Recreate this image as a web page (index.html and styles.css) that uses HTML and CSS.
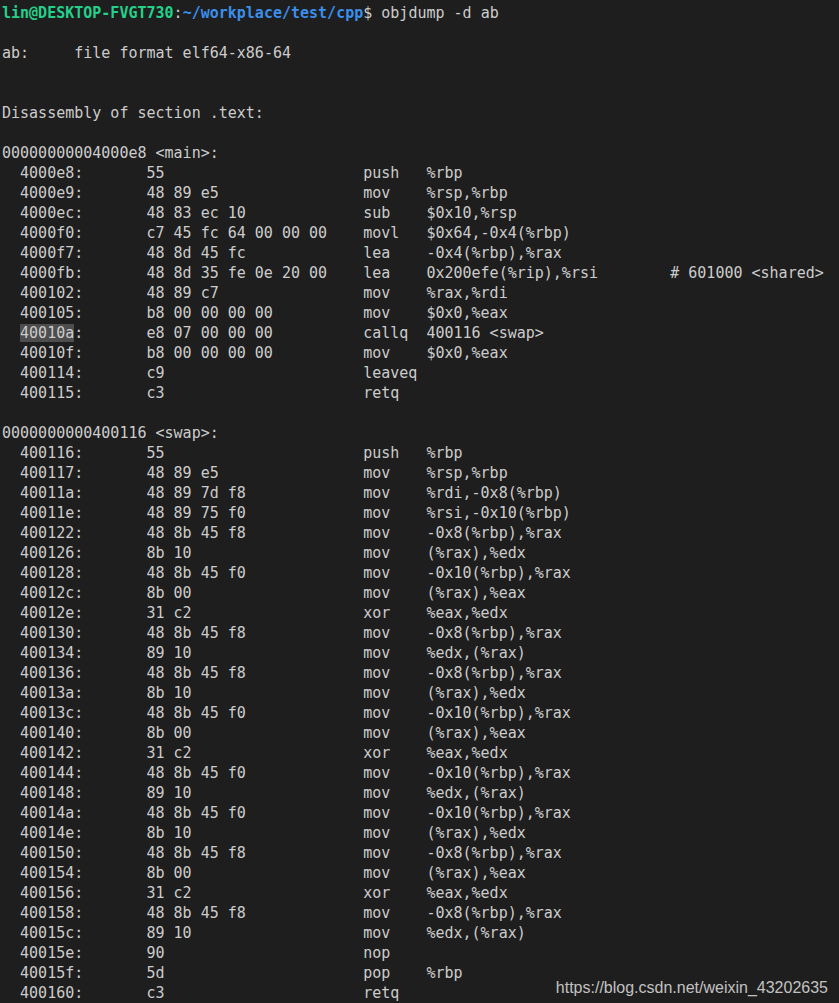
FILE: index.html
```html
<!DOCTYPE html>
<html>
<head>
<meta charset="utf-8">
<link rel="stylesheet" href="styles.css">
</head>
<body>
<div class="term">
  <div class="line"><span class="user">lin@DESKTOP-FVGT730</span>:<span class="path">~/workplace/test/cpp</span>$ objdump -d ab</div>
  <div class="line"></div>
  <div class="line">ab:     file format elf64-x86-64</div>
  <div class="line"></div>
  <div class="line"></div>
  <div class="line">Disassembly of section .text:</div>
  <div class="line"></div>
  <div class="line">00000000004000e8 &lt;main&gt;:</div>
  <div class="ins"><span class="addr">4000e8:</span><span class="hex">55</span><span class="mn">push</span><span>%rbp</span></div>
  <div class="ins"><span class="addr">4000e9:</span><span class="hex">48 89 e5</span><span class="mn">mov</span><span>%rsp,%rbp</span></div>
  <div class="ins"><span class="addr">4000ec:</span><span class="hex">48 83 ec 10</span><span class="mn">sub</span><span>$0x10,%rsp</span></div>
  <div class="ins"><span class="addr">4000f0:</span><span class="hex">c7 45 fc 64 00 00 00</span><span class="mn">movl</span><span>$0x64,-0x4(%rbp)</span></div>
  <div class="ins"><span class="addr">4000f7:</span><span class="hex">48 8d 45 fc</span><span class="mn">lea</span><span>-0x4(%rbp),%rax</span></div>
  <div class="ins"><span class="addr">4000fb:</span><span class="hex">48 8d 35 fe 0e 20 00</span><span class="mn">lea</span><span class="op-wide">0x200efe(%rip),%rsi</span><span># 601000 &lt;shared&gt;</span></div>
  <div class="ins"><span class="addr">400102:</span><span class="hex">48 89 c7</span><span class="mn">mov</span><span>%rax,%rdi</span></div>
  <div class="ins"><span class="addr">400105:</span><span class="hex">b8 00 00 00 00</span><span class="mn">mov</span><span>$0x0,%eax</span></div>
  <div class="ins"><span class="addr"><span class="sel">40010a</span>:</span><span class="hex">e8 07 00 00 00</span><span class="mn">callq</span><span>400116 &lt;swap&gt;</span></div>
  <div class="ins"><span class="addr">40010f:</span><span class="hex">b8 00 00 00 00</span><span class="mn">mov</span><span>$0x0,%eax</span></div>
  <div class="ins"><span class="addr">400114:</span><span class="hex">c9</span><span class="mn">leaveq</span></div>
  <div class="ins"><span class="addr">400115:</span><span class="hex">c3</span><span class="mn">retq</span></div>
  <div class="line"></div>
  <div class="line">0000000000400116 &lt;swap&gt;:</div>
  <div class="ins"><span class="addr">400116:</span><span class="hex">55</span><span class="mn">push</span><span>%rbp</span></div>
  <div class="ins"><span class="addr">400117:</span><span class="hex">48 89 e5</span><span class="mn">mov</span><span>%rsp,%rbp</span></div>
  <div class="ins"><span class="addr">40011a:</span><span class="hex">48 89 7d f8</span><span class="mn">mov</span><span>%rdi,-0x8(%rbp)</span></div>
  <div class="ins"><span class="addr">40011e:</span><span class="hex">48 89 75 f0</span><span class="mn">mov</span><span>%rsi,-0x10(%rbp)</span></div>
  <div class="ins"><span class="addr">400122:</span><span class="hex">48 8b 45 f8</span><span class="mn">mov</span><span>-0x8(%rbp),%rax</span></div>
  <div class="ins"><span class="addr">400126:</span><span class="hex">8b 10</span><span class="mn">mov</span><span>(%rax),%edx</span></div>
  <div class="ins"><span class="addr">400128:</span><span class="hex">48 8b 45 f0</span><span class="mn">mov</span><span>-0x10(%rbp),%rax</span></div>
  <div class="ins"><span class="addr">40012c:</span><span class="hex">8b 00</span><span class="mn">mov</span><span>(%rax),%eax</span></div>
  <div class="ins"><span class="addr">40012e:</span><span class="hex">31 c2</span><span class="mn">xor</span><span>%eax,%edx</span></div>
  <div class="ins"><span class="addr">400130:</span><span class="hex">48 8b 45 f8</span><span class="mn">mov</span><span>-0x8(%rbp),%rax</span></div>
  <div class="ins"><span class="addr">400134:</span><span class="hex">89 10</span><span class="mn">mov</span><span>%edx,(%rax)</span></div>
  <div class="ins"><span class="addr">400136:</span><span class="hex">48 8b 45 f8</span><span class="mn">mov</span><span>-0x8(%rbp),%rax</span></div>
  <div class="ins"><span class="addr">40013a:</span><span class="hex">8b 10</span><span class="mn">mov</span><span>(%rax),%edx</span></div>
  <div class="ins"><span class="addr">40013c:</span><span class="hex">48 8b 45 f0</span><span class="mn">mov</span><span>-0x10(%rbp),%rax</span></div>
  <div class="ins"><span class="addr">400140:</span><span class="hex">8b 00</span><span class="mn">mov</span><span>(%rax),%eax</span></div>
  <div class="ins"><span class="addr">400142:</span><span class="hex">31 c2</span><span class="mn">xor</span><span>%eax,%edx</span></div>
  <div class="ins"><span class="addr">400144:</span><span class="hex">48 8b 45 f0</span><span class="mn">mov</span><span>-0x10(%rbp),%rax</span></div>
  <div class="ins"><span class="addr">400148:</span><span class="hex">89 10</span><span class="mn">mov</span><span>%edx,(%rax)</span></div>
  <div class="ins"><span class="addr">40014a:</span><span class="hex">48 8b 45 f0</span><span class="mn">mov</span><span>-0x10(%rbp),%rax</span></div>
  <div class="ins"><span class="addr">40014e:</span><span class="hex">8b 10</span><span class="mn">mov</span><span>(%rax),%edx</span></div>
  <div class="ins"><span class="addr">400150:</span><span class="hex">48 8b 45 f8</span><span class="mn">mov</span><span>-0x8(%rbp),%rax</span></div>
  <div class="ins"><span class="addr">400154:</span><span class="hex">8b 00</span><span class="mn">mov</span><span>(%rax),%eax</span></div>
  <div class="ins"><span class="addr">400156:</span><span class="hex">31 c2</span><span class="mn">xor</span><span>%eax,%edx</span></div>
  <div class="ins"><span class="addr">400158:</span><span class="hex">48 8b 45 f8</span><span class="mn">mov</span><span>-0x8(%rbp),%rax</span></div>
  <div class="ins"><span class="addr">40015c:</span><span class="hex">89 10</span><span class="mn">mov</span><span>%edx,(%rax)</span></div>
  <div class="ins"><span class="addr">40015e:</span><span class="hex">90</span><span class="mn">nop</span></div>
  <div class="ins"><span class="addr">40015f:</span><span class="hex">5d</span><span class="mn">pop</span><span>%rbp</span></div>
  <div class="ins"><span class="addr">400160:</span><span class="hex">c3</span><span class="mn">retq</span></div>
</div>
<div class="watermark">https://blog.csdn.net/weixin_43202635</div>
</body>
</html>
```

FILE: styles.css
```css
html, body {
  margin: 0;
  padding: 0;
  background: #1e1e1e;
  width: 839px;
  height: 1003px;
  overflow: hidden;
}
body {
  position: relative;
}
.term {
  padding: 3px 0 0 2px;
  font-family: "DejaVu Sans Mono", "Liberation Mono", monospace;
  font-size: 15px;
  line-height: 20px;
  color: #cccccc;
}
.line {
  height: 20px;
  white-space: pre;
}
.ins {
  display: flex;
  height: 20px;
  white-space: pre;
}
.addr {
  display: inline-block;
  width: 14ch;
  padding-left: 2ch;
}
.hex {
  display: inline-block;
  width: 24ch;
}
.mn {
  display: inline-block;
  width: 7ch;
}
.op-wide {
  display: inline-block;
  width: 27ch;
}
.sel {
  background: #4d4d4d;
}
.user {
  color: #23d18b;
  font-weight: bold;
}
.path {
  color: #3b8eea;
  font-weight: bold;
}
.watermark {
  position: absolute;
  right: 11px;
  bottom: 5px;
  font-family: "Liberation Sans", Arial, sans-serif;
  font-size: 16px;
  line-height: 20px;
  color: #c2c2c2;
}
```
